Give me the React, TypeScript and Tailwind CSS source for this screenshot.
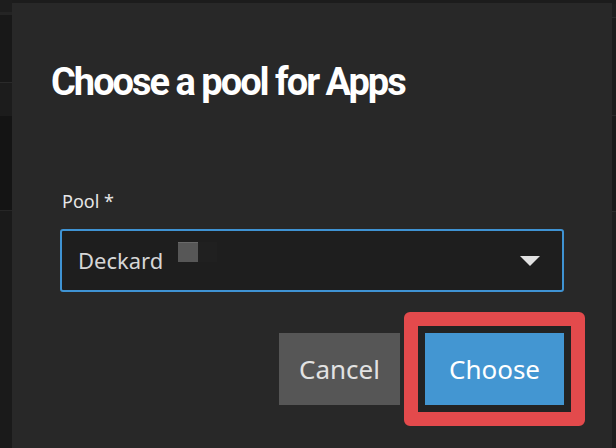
import { useState } from "react";

const Redacted = () => (
  <div className="mb-[17px] ml-[15px] flex">
    <span className="h-[20px] w-[20px] border-t border-[#6a6a6a] bg-[#575757]" />
    <span className="h-[20px] w-[19px] bg-[#202020]" />
  </div>
);

export default function App() {
  const [pool] = useState("Deckard");

  return (
    <div className="flex h-[448px] w-[616px] overflow-hidden bg-[#1c1c1c]">
      {/* page behind the dialog, left edge */}
      <div className="flex w-[12px] shrink-0 flex-col">
        <div className="h-[12px] bg-[#1d1d1d]" />
        <div className="h-[3px] bg-[#242424]" />
        <div className="h-[67px] bg-[#181818]" />
        <div className="h-px bg-[#2a2a2a]" />
        <div className="h-[33px] bg-[#1c1c1c]" />
        <div className="h-[94px] bg-[#141414]" />
        <div className="h-px bg-[#262626]" />
        <div className="flex-1 bg-[#1a1a1a]" />
      </div>

      {/* dialog */}
      <div
        className="mt-[3px] flex w-[600px] shrink-0 flex-col bg-[#282828] px-[48px] pt-[57px]"
        style={{ fontFamily: "'Noto Sans', 'Open Sans', sans-serif" }}
      >
        <h1 className="-ml-[9px] font-['Roboto',sans-serif] text-[38px] leading-[44px] font-bold tracking-[-2px] text-white">
          Choose a pool for Apps
        </h1>

        <label className="mt-[85px] ml-[2px] text-[18px] leading-[24px] text-[#e6e6e6]">
          Pool *
        </label>

        <div className="mt-[16px] flex h-[63px] items-center rounded-[3px] border-2 border-[#3f93d3] bg-[#1e1e1e] pr-[22px] pl-[16px]">
          <span className="text-[22px] text-[#d6d6d6]">{pool}</span>
          <Redacted />
          <div className="flex-1" />
          <svg width="20" height="10" viewBox="0 0 20 10">
            <path d="M0 0h20L10 10z" fill="#e2e2e2" />
          </svg>
        </div>

        <div className="mt-[41px] flex justify-end gap-[25px]">
          <button className="h-[72px] w-[121px] bg-[#565656] text-[26px] text-[#e2e2e2]">
            Cancel
          </button>
          <div className="relative">
            <button className="h-[72px] w-[139px] bg-[#4396d2] text-[26px] text-white">
              Choose
            </button>
            {/* highlight annotation */}
            <span className="pointer-events-none absolute -inset-[21px] rounded-[6px] border-[14px] border-[#e34a4c]">
              <span className="block h-full w-full border-[7px] border-[#232323]" />
            </span>
          </div>
        </div>
      </div>

      {/* page behind the dialog, right edge */}
      <div className="flex flex-1 flex-col">
        <div className="h-[4px] bg-[#1c1c1c]" />
        <div className="h-[13px] bg-[#1e1e1e]" />
        <div className="h-px bg-[#2a2a2a]" />
        <div className="h-[97px] bg-[#1c1c1c]" />
        <div className="h-px bg-[#2a2a2a]" />
        <div className="h-[95px] bg-[#1a1a1a]" />
        <div className="h-px bg-[#2c2c2c]" />
        <div className="flex-1 bg-[#1e1e1e]" />
      </div>
    </div>
  );
}
